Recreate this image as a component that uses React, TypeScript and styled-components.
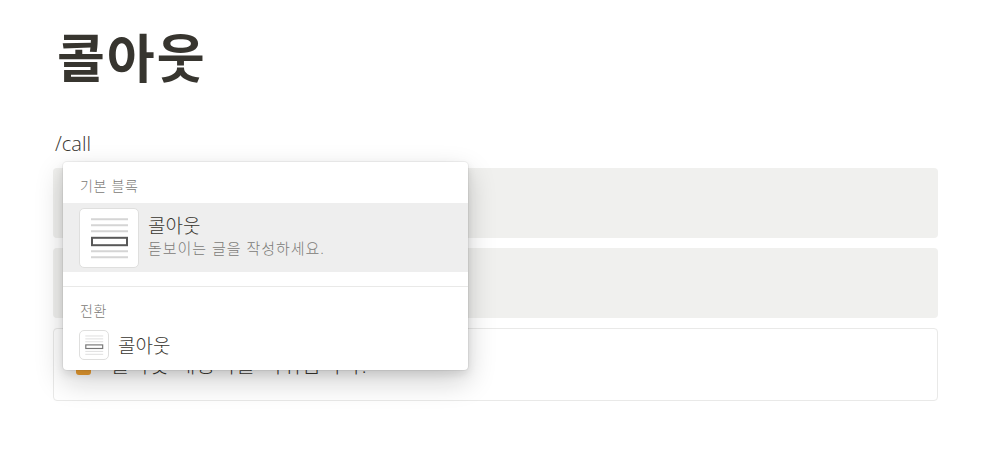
import React from "react";
import styled, { createGlobalStyle } from "styled-components";

const App = () => {
  return (
    <>
      <GlobalStyle />
      <Page>
        <Title>콜아웃</Title>
        <Editor>
          <Command>/call</Command>
          <SlashMenu>
            <SectionLabel>기본 블록</SectionLabel>
            <MenuItem>
              <Thumb $size={60}>
                <CalloutIcon size={58} />
              </Thumb>
              <ItemText>
                <ItemName>콜아웃</ItemName>
                <ItemDesc>돋보이는 글을 작성하세요.</ItemDesc>
              </ItemText>
            </MenuItem>
            <Divider />
            <SectionLabel>전환</SectionLabel>
            <TurnItem>
              <Thumb $size={30}>
                <CalloutIcon size={28} faded />
              </Thumb>
              <ItemName>콜아웃</ItemName>
            </TurnItem>
          </SlashMenu>
        </Editor>
        <Blocks>
          <Callout />
          <Callout />
          <Callout $outlined>
            <Emoji />
            <CalloutText>콜아웃 내용이를 띄워줍니다.</CalloutText>
          </Callout>
        </Blocks>
      </Page>
    </>
  );
};

const CalloutIcon = ({ size, faded }: { size: number; faded?: boolean }) => (
  <svg width={size} height={size} viewBox="0 0 58 58">
    <path
      d="M11 10.3h37M11 16.3h37M11 22.3h37M11 42.3h37M11 48.3h37"
      stroke={faded ? "#dedede" : "#d5d5d5"}
      strokeWidth="2"
    />
    <rect
      x="12"
      y="28.8"
      width="35"
      height="7.4"
      fill="#fff"
      stroke={faded ? "#777" : "#585858"}
      strokeWidth={faded ? 2.4 : 2}
    />
  </svg>
);

export default App;

const GlobalStyle = createGlobalStyle`
  * {
    box-sizing: border-box;
  }

  body {
    margin: 0;
    background: #fff;
    color: #37352f;
    font-family: "Open Sans", "Noto Sans CJK KR", sans-serif;
  }
`;

const Page = styled.main`
  height: 465px;
  padding: 22px 63px 0 53px;
  overflow: hidden;
`;

const Title = styled.h1`
  margin: 0;
  height: 72px;
  padding-left: 4px;
  font-size: 52px;
  line-height: 72px;
  font-weight: 700;
  letter-spacing: 2px;
`;

const Editor = styled.div`
  position: relative;
  height: 74px;
  padding: 36px 2px 0;
`;

const Command = styled.div`
  font-size: 20px;
  line-height: 28px;
  font-weight: 300;
`;

const SlashMenu = styled.div`
  position: absolute;
  z-index: 1;
  top: 68px;
  left: 10px;
  width: 405px;
  height: 208px;
  background: #fff;
  border-radius: 4px;
  box-shadow: 0 0 0 1px rgba(15, 15, 15, 0.05), 0 4px 8px rgba(15, 15, 15, 0.1),
    0 11px 29px rgba(15, 15, 15, 0.2);
`;

const SectionLabel = styled.div`
  height: 41px;
  padding: 13px 17px 0;
  color: #7b7a76;
  font-size: 14px;
  line-height: 21px;
  font-weight: 300;
  letter-spacing: 0.7px;
`;

const MenuItem = styled.div`
  display: flex;
  gap: 9px;
  height: 69px;
  padding: 5px 16px;
  background: #eee;
`;

const TurnItem = styled.div`
  display: flex;
  gap: 9px;
  padding: 2px 16px 0;
`;

const Thumb = styled.div<{ $size: number }>`
  flex: none;
  width: ${({ $size }) => $size}px;
  height: ${({ $size }) => $size}px;
  border: 1px solid #dfdfde;
  border-radius: 5px;
  background: #fff;

  svg {
    display: block;
  }
`;

const ItemText = styled.div`
  display: flex;
  flex-direction: column;
  padding-top: 2px;
`;

const ItemName = styled.div`
  padding-top: 4px;
  font-size: 19px;
  line-height: 24px;
  font-weight: 300;
`;

const ItemDesc = styled.div`
  color: #7b7a77;
  font-size: 15px;
  line-height: 20px;
  font-weight: 300;
  letter-spacing: 0.98px;
`;

const Divider = styled.div`
  height: 15px;
  border-bottom: 1px solid #e9e9e8;
`;

const Blocks = styled.div`
  display: flex;
  flex-direction: column;
  gap: 10px;
`;

const Callout = styled.div<{ $outlined?: boolean }>`
  display: flex;
  height: ${({ $outlined }) => ($outlined ? 73 : 70)}px;
  padding: 20px 22px;
  border: ${({ $outlined }) => ($outlined ? "1px solid #e9e9e8" : "0")};
  border-radius: 4px;
  background: ${({ $outlined }) => ($outlined ? "#fff" : "#f0f0ee")};
`;

const Emoji = styled.div`
  width: 15px;
  height: 19px;
  margin-top: 7px;
  border-radius: 3px;
  background: #f0a030;
`;

const CalloutText = styled.div`
  margin-left: 20px;
  font-size: 20px;
  line-height: 34px;
  font-weight: 300;
  letter-spacing: 1.4px;
`;
